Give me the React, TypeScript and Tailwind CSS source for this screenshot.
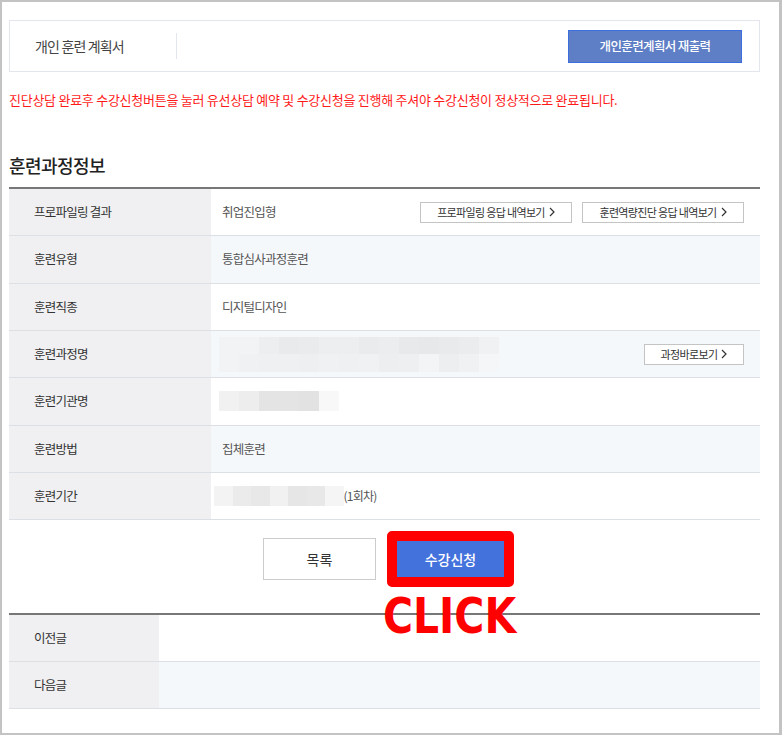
const FONT = { fontFamily: '"Noto Sans CJK KR", "Noto Sans", sans-serif' }

function Chevron() {
	return (
		<svg width="6" height="10" viewBox="0 0 6 10" className="ml-[4px] shrink-0">
			<path d="M1 1l4 4-4 4" fill="none" stroke="#333" strokeWidth="1.2" />
		</svg>
	)
}

function SmallButton({ label, width }: { label: string; width: string }) {
	return (
		<button className={`flex h-[21px] items-center justify-center border border-[#c4c4c4] bg-white text-[11px] tracking-[-0.06em] text-[#333] ${width}`}>
			{label}
			<Chevron />
		</button>
	)
}

// pixelated blocks standing in for the hidden text
function Mosaic({ rows, cell }: { rows: string[][]; cell: string }) {
	return (
		<div className="flex flex-col">
			{rows.map((row, i) => (
				<div key={i} className="flex">
					{row.map((c, j) => (
						<div key={j} className={cell} style={{ background: c }} />
					))}
				</div>
			))}
		</div>
	)
}

const courseMosaic = [
	['#f2f3f5', '#f2f3f5', '#eceef0', '#e8eaec', '#eaebed', '#eceef0', '#eceef0', '#e9ebed', '#ecedef', '#e8e9eb', '#e6e8ea', '#e9eaec', '#eaecee', '#f0f1f3'],
	['#f2f3f5', '#f0f1f3', '#eef0f2', '#eff0f2', '#eeeff1', '#f0f1f3', '#eef0f2', '#f0f1f3', '#eceef0', '#eeeff1', '#f3f4f6', '#eceef0', '#f0f1f3', '#f5f6f8'],
]

const instMosaic = [['#f1f1f1', '#ededed', '#e4e4e4', '#e4e4e4', '#e2e2e2', '#f8f8f8']]
const periodMosaic = [['#f3f3f3', '#ebebeb', '#e8e8e8', '#f1f1f1', '#e6e6e6', '#e8e8e8', '#f5f5f5']]

type Row = { label: string; value: React.ReactNode; tint: boolean; h: string }

const rows: Row[] = [
	{
		label: '프로파일링 결과',
		tint: false,
		h: 'h-[47px]',
		value: (
			<div className="flex w-full items-center justify-between">
				<span>취업진입형</span>
				<div className="flex gap-[10px]">
					<SmallButton label="프로파일링 응답 내역보기" width="w-[152px]" />
					<SmallButton label="훈련역량진단 응답 내역보기" width="w-[162px]" />
				</div>
			</div>
		),
	},
	{ label: '훈련유형', tint: true, h: 'h-[48px]', value: '통합심사과정훈련' },
	{ label: '훈련직종', tint: false, h: 'h-[47px]', value: '디지털디자인' },
	{
		label: '훈련과정명',
		tint: true,
		h: 'h-[47px]',
		value: (
			<div className="flex w-full items-center justify-between">
				<div className="-ml-[3px]">
					<Mosaic rows={courseMosaic} cell="h-[17.5px] w-[20px]" />
				</div>
				<SmallButton label="과정바로보기" width="w-[100px]" />
			</div>
		),
	},
	{
		label: '훈련기관명',
		tint: false,
		h: 'h-[48px]',
		value: (
			<div className="-ml-[3px] -mt-[2px]">
				<Mosaic rows={instMosaic} cell="h-[20px] w-[20px]" />
			</div>
		),
	},
	{ label: '훈련방법', tint: true, h: 'h-[47px]', value: '집체훈련' },
	{
		label: '훈련기간',
		tint: false,
		h: 'h-[47px]',
		value: (
			<div className="-ml-[8px] flex items-center">
				<Mosaic rows={periodMosaic} cell="h-[20px] w-[18.5px]" />
				<span className="text-[12px]">(1회차)</span>
			</div>
		),
	},
]

export default function App() {
	return (
		<div
			className="box-border h-[735px] w-[782px] border-t-2 border-r-[3px] border-b-2 border-l-2 border-[#c3c3c3] bg-white pt-[18px] pl-[7px]"
			style={FONT}
		>
			<div className="w-[751px]">
				<div className="flex h-[52px] items-center border border-[#e3e6ec] pr-[17px] pl-[25px]">
					<span className="text-[14px] tracking-[-0.06em] text-[#444]">개인 훈련 계획서</span>
					<div className="ml-[52px] h-[26px] w-px bg-[#e3e6ec]" />
					<button className="ml-auto h-[33px] w-[174px] border border-[#3d6ee0] bg-[#5e7ec5] text-[12.5px] font-medium tracking-[-0.05em] text-white">
						개인훈련계획서 재출력
					</button>
				</div>

				<p className="mt-[18px] text-[13px] leading-[20px] tracking-[-0.02em] text-[#ff1a1a]">
					진단상담 완료후 수강신청버튼을 눌러 유선상담 예약 및 수강신청을 진행해 주셔야 수강신청이 정상적으로 완료됩니다.
				</p>

				<h2 className="mt-[42px] text-[18px] leading-[26px] font-medium tracking-[-0.03em] text-[#222]">훈련과정정보</h2>

				<div className="mt-[9px] border-t-2 border-[#777]">
					{rows.map((r) => (
						<div key={r.label} className={`flex border-b border-[#dcdfe3] ${r.h}`}>
							<div className="flex w-[202px] items-center bg-[#f0f0f2] pl-[25px] text-[12.5px] tracking-[-0.06em] text-[#333]">
								{r.label}
							</div>
							<div
								className={`flex flex-1 items-center pr-[16px] pl-[11px] text-[12.5px] tracking-[-0.06em] text-[#555] ${r.tint ? 'bg-[#f5f8fb]' : 'bg-white'}`}
							>
								{r.value}
							</div>
						</div>
					))}
				</div>

				<div className="mt-[11px] flex h-[56px] items-center justify-center gap-[11px] pl-[8px]">
					<button className="h-[42px] w-[113px] border border-[#cccccc] bg-white text-[14px] text-[#333]">목록</button>
					<div className="relative">
						<div className="flex h-[56px] w-[127px] rounded-[5px] border-[10px] border-[#ff0000]">
							<button className="flex-1 bg-[#4472dd] text-[14px] font-medium text-white">수강신청</button>
						</div>
						<span
							className="absolute top-[60px] -left-[4px] origin-left scale-x-[0.91] text-[50px] leading-none font-bold text-[#ff0000]"
							style={{ fontFamily: '"DejaVu Sans Condensed", "DejaVu Sans", sans-serif' }}
						>
							CLICK
						</span>
					</div>
				</div>

				<div className="mt-[26px] border-t-2 border-[#777]">
					{['이전글', '다음글'].map((l, i) => (
						<div key={l} className="flex h-[47px] border-b border-[#dcdfe3]">
							<div className="flex w-[150px] items-center bg-[#f0f0f2] pl-[25px] text-[12.5px] tracking-[-0.06em] text-[#333]">
								{l}
							</div>
							<div className={`flex-1 ${i === 1 ? 'bg-[#f5f8fb]' : 'bg-white'}`} />
						</div>
					))}
				</div>
			</div>
		</div>
	)
}
